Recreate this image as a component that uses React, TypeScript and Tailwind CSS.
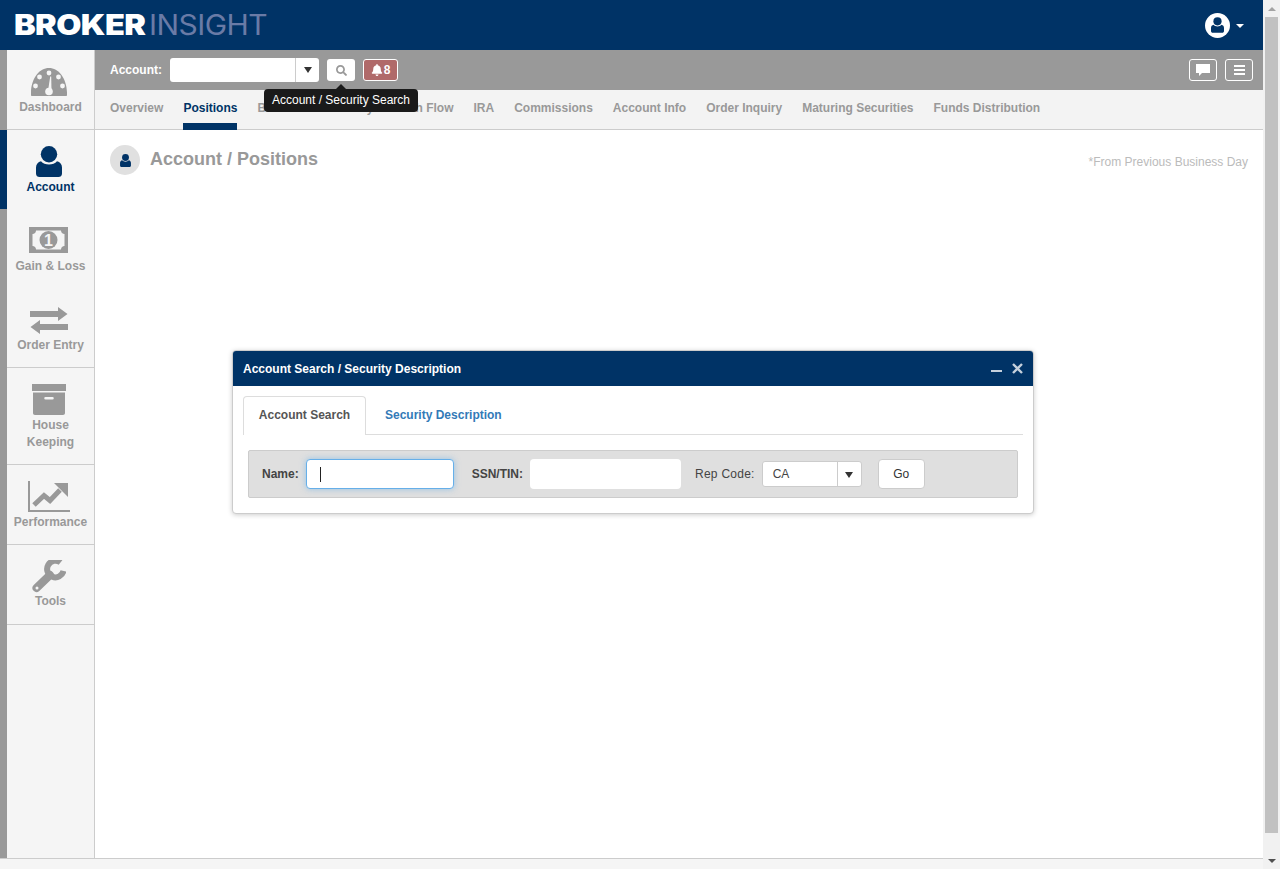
import React from "react";
import { FaSearch, FaBell } from "react-icons/fa";

const font = { fontFamily: '"Liberation Sans", Arial, sans-serif' };
const tabs = ["Overview", "Positions", "Balances", "Activity", "Cash Flow", "IRA", "Commissions", "Account Info", "Order Inquiry", "Maturing Securities", "Funds Distribution"];

function UserGlyph({ className }: { className?: string }) {
  return (
    <svg viewBox="0 0 26 31" className={className} fill="currentColor">
      <circle cx="13" cy="8.2" r="8.2" />
      <path d="M5 15.2c1.8 2.2 4.8 3.2 8 3.2s6.200-1 8-3.200c3 .8 5 3 5 6.300v6c0 2.400-1.600 3.500-3.500 3.500h-19C1.600 31 0 29.900 0 27.500v-6c0-3.300 2-5.500 5-6.300z" />
    </svg>
  );
}

function Gauge() {
  return (
    <svg width="36" height="28" viewBox="0 0 36 28">
      <path d="M0 27C-.5 11 8 0 18 0s18.500 11 18 27c0 .6-.4 1-1 1H1c-.6 0-1-.4-1-1z" fill="#999" />
      <g fill="#f5f5f5">
        <circle cx="18" cy="5" r="2.400" />
        <circle cx="8.500" cy="9" r="2.400" />
        <circle cx="27.500" cy="9" r="2.400" />
        <circle cx="4.500" cy="18" r="2.400" />
        <circle cx="31.500" cy="18" r="2.400" />
        <circle cx="18" cy="23.500" r="3.800" />
        <path d="M17 23l2.200-14.500h1L20.500 23z" />
      </g>
    </svg>
  );
}

function Money() {
  return (
    <svg width="39" height="26" viewBox="0 0 39 26">
      <path fillRule="evenodd" d="M0 0h39v26H0zM7 3.500c0 2-1.500 3.500-3.500 3.500v12c2 0 3.500 1.500 3.500 3.500h25c0-2 1.500-3.500 3.500-3.500V7c-2 0-3.500-1.500-3.500-3.500z" fill="#999" />
      <circle cx="19.500" cy="13" r="9" fill="#999" />
      <text x="19.500" y="18.500" textAnchor="middle" fontSize="16" fontWeight="700" fill="#f5f5f5" fontFamily="Liberation Sans">1</text>
    </svg>
  );
}

function Arrows() {
  return (
    <svg width="38" height="27" viewBox="0 0 38 27" fill="#999">
      <path d="M0 4h28V0l9.500 7L28 14v-4H0z" />
      <path d="M38 17H10v-4L.5 20 10 27v-4h28z" />
    </svg>
  );
}

function BoxIcon() {
  return (
    <svg width="34" height="31" viewBox="0 0 34 31" fill="#999">
      <rect x="0" y="0" width="34" height="7" />
      <path fillRule="evenodd" d="M1 8.500h32V29c0 1.200-.8 2-2 2H3c-1.200 0-2-.8-2-2zM13.500 13a1 1 0 000 2.500h7a1 1 0 000-2.500z" />
    </svg>
  );
}

function Perf() {
  return (
    <svg width="42" height="31" viewBox="0 0 42 31" fill="#999">
      <path d="M0 0h2v29h41v2H0z" />
      <path d="M6 24l10-9.500 6 5L32 9" fill="none" stroke="#999" strokeWidth="5" />
      <path d="M26 2h14v14z" />
    </svg>
  );
}

function Wrench() {
  return (
    <svg width="34" height="33" viewBox="0 0 34 33">
      <path d="M28.500 2.500A8.300 8.300 0 1 0 31.500 11" fill="none" stroke="#999" strokeWidth="6" />
      <path d="M18 15L4.500 28" stroke="#999" strokeWidth="8" strokeLinecap="round" />
      <circle cx="5" cy="28" r="1.500" fill="#f5f5f5" />
    </svg>
  );
}

function NavItem({ label, icon, active, border, h, iconH, gap }: { label: React.ReactNode; icon: React.ReactNode; active?: boolean; border?: boolean; h: string; iconH: string; gap: string }) {
  return (
    <div className={`flex ${h}`}>
      <div className={`w-[7px] shrink-0 ${active ? "bg-[#003366]" : "bg-[#999999]"}`} />
      <div className={`flex-1 flex flex-col items-center bg-[#f5f5f5] border-r border-[#cccccc] ${border ? "border-b" : ""}`}>
        <div className={`flex items-end justify-center pr-[4px] ${iconH}`}>{icon}</div>
        <div className={`${gap} text-center text-[12px] leading-[17px] font-bold ${active ? "text-[#003366]" : "text-[#999999]"}`}>{label}</div>
      </div>
    </div>
  );
}

export default function App() {
  return (
    <div style={font} className="flex h-[869px] w-[1280px] overflow-hidden bg-white">
      <div className="relative flex min-w-0 flex-1 flex-col">
        <header className="flex h-[50px] shrink-0 items-center justify-between bg-[#003366] pl-[14px] pr-[19px]">
          <div className="flex items-center text-[28px] leading-none tracking-[-0.5px]">
            <span style={{ fontFamily: "Inter, sans-serif" }} className="inline-block w-[135px] origin-left scale-x-[1.16] font-black text-white">BROKER</span>
            <span style={{ fontFamily: "Inter, sans-serif" }} className="inline-block w-[117px] origin-left scale-x-[1.07] font-normal text-[#6a7ba6]">INSIGHT</span>
          </div>
          <div className="flex items-center gap-[6px]">
            <div className="flex h-[25px] w-[25px] items-center justify-center rounded-full bg-white text-[#003366]">
              <UserGlyph className="h-[16px] w-[13px]" />
            </div>
            <div className="mt-[1px] h-0 w-0 border-x-[4px] border-t-[4px] border-x-transparent border-t-white" />
          </div>
        </header>

        <div className="flex min-h-0 flex-1">
          <aside className="flex w-[95px] shrink-0 flex-col">
            <NavItem h="h-[80px]" iconH="h-[46px]" gap="mt-[3px]" border label="Dashboard" icon={<Gauge />} />
            <NavItem h="h-[79px]" iconH="h-[47px]" gap="mt-[2px]" active label="Account" icon={<UserGlyph className="h-[31px] w-[26px] text-[#003366]" />} />
            <NavItem h="h-[79px]" iconH="h-[44px]" gap="mt-[5px]" label="Gain & Loss" icon={<Money />} />
            <NavItem h="h-[80px]" iconH="h-[46px]" gap="mt-[3px]" border label="Order Entry" icon={<Arrows />} />
            <NavItem h="h-[97px]" iconH="h-[47px]" gap="mt-[2px]" border label={<>House<br />Keeping</>} icon={<BoxIcon />} />
            <NavItem h="h-[80px]" iconH="h-[47px]" gap="mt-[2px]" border label="Performance" icon={<Perf />} />
            <NavItem h="h-[80px]" iconH="h-[48px]" gap="mt-0" border label="Tools" icon={<Wrench />} />
            <div className="flex flex-1">
              <div className="w-[7px] bg-[#999999]" />
              <div className="flex-1 border-r border-[#cccccc] bg-[#f5f5f5]" />
            </div>
          </aside>

          <main className="flex min-w-0 flex-1 flex-col">
            <div className="flex h-[40px] shrink-0 items-center bg-[#999999] pl-[15px] pr-[10px]">
              <span className="mr-[8px] text-[12px] font-bold text-white">Account:</span>
              <div className="flex h-[24px] w-[149px] rounded-[3px] bg-white">
                <div className="flex-1" />
                <div className="flex w-[24px] items-center justify-center border-l border-[#cccccc]">
                  <div className="h-0 w-0 border-x-[4px] border-t-[6px] border-x-transparent border-t-[#333333]" />
                </div>
              </div>
              <div className="ml-[8px] flex h-[22px] w-[28px] items-center justify-center rounded-[3px] bg-white">
                <FaSearch className="h-[11px] w-[11px] text-[#999999]" />
              </div>
              <div className="ml-[8px] flex h-[22px] w-[35px] items-center justify-center gap-[1px] rounded-[3px] border border-white bg-[#b06a6a] text-[12px] font-bold text-white">
                <FaBell className="h-[12px] w-[12px]" />8
              </div>
              <div className="ml-auto flex h-[22px] w-[28px] items-center justify-center rounded-[3px] border border-white">
                <svg width="14" height="12" viewBox="0 0 14 12" fill="white"><path d="M0 0h14v9H6l-3 3V9H0z" /></svg>
              </div>
              <div className="ml-[8px] flex h-[22px] w-[28px] flex-col items-center justify-center gap-[2px] rounded-[3px] border border-white">
                <div className="h-[2px] w-[11px] bg-white" />
                <div className="h-[2px] w-[11px] bg-white" />
                <div className="h-[2px] w-[11px] bg-white" />
              </div>
            </div>

            <nav className="flex h-[40px] shrink-0 gap-[20px] border-b border-[#cccccc] bg-[#f3f3f3] pl-[15px]">
              {tabs.map((t) => (
                <div key={t} className={`flex h-[40px] items-start pt-[11px] text-[12px] font-bold leading-[15px] ${t === "Positions" ? "border-b-[7px] border-[#003366] text-[#003366]" : "text-[#999999]"}`}>
                  {t}
                </div>
              ))}
            </nav>

            <div className="flex items-start justify-between pl-[15px] pr-[15px] pt-[15px]">
              <div className="flex items-center gap-[10px]">
                <div className="flex h-[30px] w-[30px] items-center justify-center rounded-full bg-[#e0e0e0] text-[#003366]">
                  <UserGlyph className="h-[13px] w-[11px]" />
                </div>
                <span className="pb-[2px] text-[18px] font-bold leading-[28px] text-[#999999]">Account / Positions</span>
              </div>
              <span className="mt-[9px] text-[12px] leading-[16px] text-[#bbbbbb]">*From Previous Business Day</span>
            </div>
          </main>
        </div>

        <div className="h-[11px] shrink-0 border-t border-[#cccccc] bg-[#f5f5f5]" />

        {/* tooltip */}
        <div className="absolute left-[264px] top-[89px] h-[23px] w-[154px] rounded-[4px] bg-[#1a1a1a] text-center text-[12px] leading-[22px] text-white">
          <div className="absolute left-[72px] top-[-5px] h-0 w-0 border-x-[5px] border-b-[5px] border-x-transparent border-b-[#1a1a1a]" />
          Account / Security Search
        </div>

        {/* floating window */}
        <div className="absolute left-[232px] top-[350px] h-[164px] w-[802px] rounded-[4px] border border-[#cccccc] bg-white shadow-[0_1px_5px_rgba(0,0,0,0.2)]">
          <div className="flex h-[35px] items-center justify-between rounded-t-[3px] bg-[#003366] pl-[10px] pr-[10px]">
            <span className="text-[12px] font-bold text-white">Account Search / Security Description</span>
            <div className="flex items-center gap-[10px]">
              <div className="mt-[5px] h-[2px] w-[11px] bg-[#c5d0dc]" />
              <svg width="11" height="11" viewBox="0 0 11 11" stroke="#c5d0dc" strokeWidth="2.400"><path d="M1 1l9 9M10 1l-9 9" /></svg>
            </div>
          </div>
          <div className="px-[10px] pt-[10px]">
            <div className="flex h-[39px] border-b border-[#dddddd]">
              <div className="flex h-[39px] w-[123px] items-center justify-center rounded-t-[4px] border border-b-0 border-[#dddddd] bg-white pb-[2px] text-[12px] font-bold text-[#555555]">Account Search</div>
              <div className="ml-[19px] flex h-[38px] items-center text-[12px] font-bold text-[#337ab7]">Security Description</div>
            </div>
          </div>
          <div className="mx-[15px] mt-[15px] flex h-[48px] items-center rounded-[2px] border border-[#cccccc] bg-[#dfdfdf] pl-[13px] text-[12px] font-bold text-[#444444]">
            <span>Name:</span>
            <div className="relative ml-[7px] h-[30px] w-[148px] rounded-[4px] border border-[#66afe9] bg-white shadow-[0_0_6px_rgba(102,175,233,0.6)]">
              <div className="absolute left-[13px] top-[7px] h-[15px] w-[1px] bg-[#222222]" />
            </div>
            <span className="ml-[18px]">SSN/TIN:</span>
            <div className="ml-[7px] h-[30px] w-[151px] rounded-[4px] bg-white" />
            <span className="ml-[14px] font-normal tracking-[0.25px]">Rep Code:</span>
            <div className="ml-[7px] flex h-[26px] w-[100px] rounded-[3px] border border-[#cccccc] bg-white font-normal">
              <div className="flex flex-1 items-center pl-[10px]">CA</div>
              <div className="flex w-[24px] items-center justify-center border-l border-[#cccccc] pt-[2px]">
                <div className="h-0 w-0 border-x-[4px] border-t-[6px] border-x-transparent border-t-[#333333]" />
              </div>
            </div>
            <div className="ml-[16px] flex h-[30px] w-[47px] items-center justify-center rounded-[4px] border border-[#cccccc] bg-white font-normal text-[#333333]">Go</div>
          </div>
        </div>
      </div>

      {/* scrollbar */}
      <div className="flex w-[17px] shrink-0 flex-col items-center bg-[#f1f1f1]">
        <div className="flex h-[17px] items-center justify-center">
          <div className="h-0 w-0 border-x-[4px] border-b-[4px] border-x-transparent border-b-[#a3a3a3]" />
        </div>
        <div className="h-[816px] w-[13px] bg-[#c1c1c1]" />
        <div className="mt-auto flex h-[17px] items-center justify-center">
          <div className="h-0 w-0 border-x-[4px] border-t-[4px] border-x-transparent border-t-[#505050]" />
        </div>
      </div>
    </div>
  );
}
